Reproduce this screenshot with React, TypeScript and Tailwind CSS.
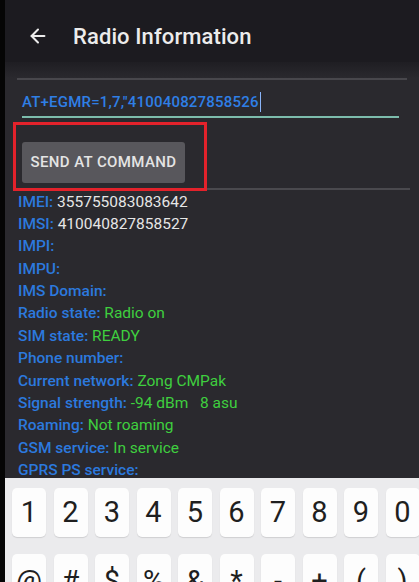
import React from 'react';
import { ArrowLeft } from 'lucide-react';

type Row = { label: string; value?: string; tone?: 'white' | 'green' };

const rows: Row[] = [
  { label: 'IMEI:', value: '355755083083642', tone: 'white' },
  { label: 'IMSI:', value: '410040827858527', tone: 'white' },
  { label: 'IMPI:' },
  { label: 'IMPU:' },
  { label: 'IMS Domain:' },
  { label: 'Radio state:', value: 'Radio on', tone: 'green' },
  { label: 'SIM state:', value: 'READY', tone: 'green' },
  { label: 'Phone number:' },
  { label: 'Current network:', value: 'Zong CMPak', tone: 'green' },
  { label: 'Signal strength:', value: '-94 dBm   8 asu', tone: 'green' },
  { label: 'Roaming:', value: 'Not roaming', tone: 'green' },
  { label: 'GSM service:', value: 'In service', tone: 'green' },
  { label: 'GPRS PS service:' },
];

const digits = ['1', '2', '3', '4', '5', '6', '7', '8', '9', '0'];
const symbols = ['@', '#', '$', '%', '&', '*', '-', '+', '(', ')'];

const App = () => {
  return (
    <div
      className="flex w-[419px] h-[582px] overflow-hidden bg-black"
      style={{ fontFamily: 'Roboto, "Noto Sans", sans-serif' }}
    >
      <div className="w-[5px] shrink-0 bg-[#050505]" />

      <div className="flex flex-col flex-1 min-w-0 bg-[#2a292e]">
        {/* app bar */}
        <div className="h-[62px] shrink-0 bg-[#1c1b20] flex items-center pt-[10px]">
          <ArrowLeft className="ml-[22px] text-[#ececec]" size={22} strokeWidth={2.2} />
          <span className="ml-[24px] text-[22px] font-medium text-[#ececec] tracking-[0.1px]">
            Radio Information
          </span>
        </div>
        <div className="h-[16px] shrink-0 bg-gradient-to-b from-[#1f1e23] to-[#2a292e]" />
        <div className="h-[2px] shrink-0 mx-[12px] bg-[#48474c]" />

        {/* command input */}
        <div className="px-[17px] pt-[12px] shrink-0">
          <div className="flex items-center h-[20px]">
            <span className="text-[15px] font-medium text-[#2f7fe6] tracking-[0.2px]">
              AT+EGMR=1,7,"410040827858526
            </span>
            <span className="w-[1.5px] h-[20px] bg-[#8ab4f8] ml-[1px]" />
          </div>
          <div className="mt-[4px] h-[2px] bg-[#7cbcac] mr-[3px]" />
        </div>

        {/* send button with red highlight */}
        <div className="relative shrink-0 h-[72px]">
          <div className="absolute left-[8px] top-[4px] w-[194px] h-[69px] border-[3px] border-[#e3222b]" />
          <div className="absolute left-[17px] top-[24px] w-[163px] h-[41px] rounded-[3px] bg-[#58575c] flex items-center justify-center">
            <span className="text-[15px] font-medium text-[#e4e4e4] tracking-[0.4px]">
              SEND AT COMMAND
            </span>
          </div>
        </div>
        <div className="h-[1.5px] shrink-0 ml-[202px] mr-[9px] bg-[#4a494e] -mt-[2px]" />

        {/* radio info */}
        <div className="flex-1 min-h-0 overflow-hidden pl-[13px] pt-[1px]">
          {rows.map((r) => (
            <div key={r.label} className="h-[22.4px] leading-[22.4px] text-[15.5px] font-medium whitespace-pre">
              <span className="text-[#2c79de]">{r.label}</span>
              {r.value && (
                <span className={r.tone === 'white' ? 'text-[#e6e6e6] font-normal' : 'text-[#3fcf3f] font-normal'}>
                  {' ' + r.value}
                </span>
              )}
            </div>
          ))}
        </div>

        {/* keyboard */}
        <div className="h-[104px] shrink-0 bg-[#ebebed] pt-[10px] pl-[7px] overflow-hidden">
          <div className="flex gap-[7.5px]">
            {digits.map((d) => (
              <div
                key={d}
                className="w-[34px] h-[49px] shrink-0 rounded-[5px] bg-[#fdfdfd] shadow-[0_1px_1px_rgba(0,0,0,0.12)] flex items-center justify-center text-[29px] text-[#1f1f1f]"
              >
                {d}
              </div>
            ))}
          </div>
          <div className="flex gap-[7.5px] mt-[17px]">
            {symbols.map((s) => (
              <div
                key={s}
                className="w-[34px] h-[49px] shrink-0 rounded-[5px] bg-[#fdfdfd] shadow-[0_1px_1px_rgba(0,0,0,0.12)] flex items-start justify-center pt-[6px] text-[29px] text-[#1f1f1f]"
              >
                {s}
              </div>
            ))}
          </div>
        </div>
      </div>
    </div>
  );
};

export default App;
